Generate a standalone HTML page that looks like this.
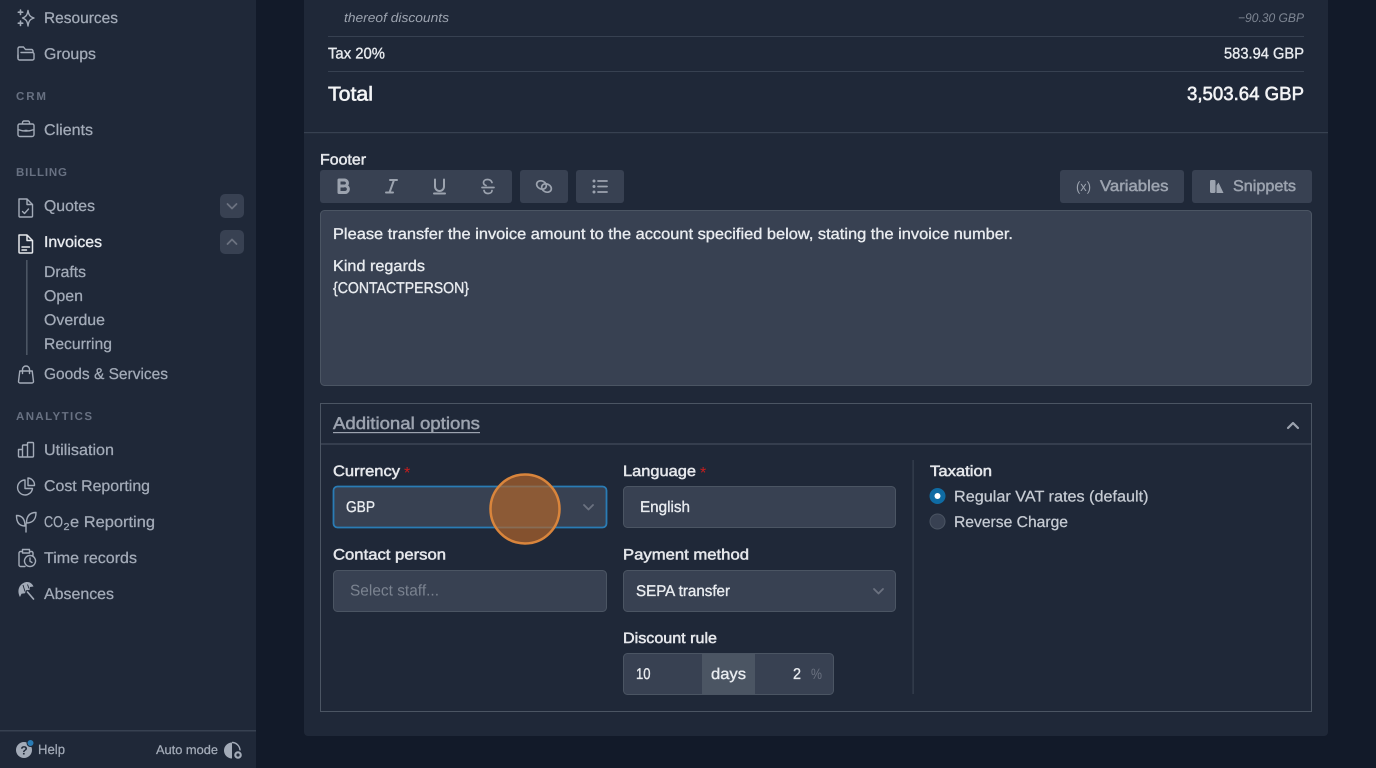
<!DOCTYPE html>
<html><head><meta charset="utf-8"><style>
html,body{margin:0;padding:0;background:#121a29;width:1376px;height:768px;overflow:hidden}
svg{display:block}
text{font-family:"Liberation Sans",sans-serif;white-space:pre;text-rendering:geometricPrecision}
.n{font-size:15.5px;fill:#a3abb8;stroke:#a3abb8;stroke-width:.25}
.h{font-size:11.5px;font-weight:700;fill:#687182}
.w{font-size:15.5px;fill:#e8ebef;stroke:#e8ebef;stroke-width:.35}
.l{font-size:15px;fill:#e5e7eb;stroke:#e5e7eb;stroke-width:.5}
.s{font-size:15.5px;fill:#c6cbd3;stroke:#c6cbd3;stroke-width:.25}
.i{fill:none;stroke:#a3abb8;stroke-width:1.4;stroke-linecap:round;stroke-linejoin:round}
.t{fill:none;stroke:#9ca3af;stroke-width:2;stroke-linecap:round;stroke-linejoin:round}
.c{fill:none;stroke:#6b7280;stroke-width:1.8;stroke-linecap:round;stroke-linejoin:round}
</style></head><body>
<svg width="1376" height="768" viewBox="0 0 1376 768" xmlns="http://www.w3.org/2000/svg">
<rect width="1376" height="768" fill="#121a29"/>
<!-- sidebar -->
<rect width="256" height="768" fill="#1f2838"/>
<rect x="0" y="730" width="256" height="1.5" fill="#374151"/>
<text class="n" x="44" y="23" textLength="74" lengthAdjust="spacingAndGlyphs">Resources</text>
<text class="n" x="44" y="59" textLength="52" lengthAdjust="spacingAndGlyphs">Groups</text>
<text class="h" x="16" y="100" textLength="30" lengthAdjust="spacing">CRM</text>
<text class="n" x="44" y="135" textLength="49" lengthAdjust="spacingAndGlyphs">Clients</text>
<text class="h" x="16" y="176" textLength="51" lengthAdjust="spacing">BILLING</text>
<text class="n" x="44" y="211" textLength="51" lengthAdjust="spacingAndGlyphs">Quotes</text>
<text class="w" x="44" y="247" textLength="58" lengthAdjust="spacingAndGlyphs">Invoices</text>
<text class="n" x="44" y="277" textLength="42" lengthAdjust="spacingAndGlyphs">Drafts</text>
<text class="n" x="44" y="301" textLength="39" lengthAdjust="spacingAndGlyphs">Open</text>
<text class="n" x="44" y="325" textLength="61" lengthAdjust="spacingAndGlyphs">Overdue</text>
<text class="n" x="44" y="349" textLength="68" lengthAdjust="spacingAndGlyphs">Recurring</text>
<text class="n" x="44" y="379" textLength="124" lengthAdjust="spacingAndGlyphs">Goods &amp; Services</text>
<text class="h" x="16" y="420" textLength="76" lengthAdjust="spacing">ANALYTICS</text>
<text class="n" x="44" y="455" textLength="70" lengthAdjust="spacingAndGlyphs">Utilisation</text>
<text class="n" x="44" y="491" textLength="106" lengthAdjust="spacingAndGlyphs">Cost Reporting</text>
<text class="n" x="44" y="527" textLength="19" lengthAdjust="spacingAndGlyphs">CO</text>
<text class="n" x="63.5" y="530" style="font-size:10px" textLength="6" lengthAdjust="spacingAndGlyphs">2</text>
<text class="n" x="70" y="527" textLength="85" lengthAdjust="spacingAndGlyphs">e Reporting</text>
<text class="n" x="44" y="563" textLength="93" lengthAdjust="spacingAndGlyphs">Time records</text>
<text class="n" x="44" y="599" textLength="70" lengthAdjust="spacingAndGlyphs">Absences</text>
<text class="n" x="38" y="754" style="font-size:13.5px" textLength="27" lengthAdjust="spacingAndGlyphs">Help</text>
<text class="n" x="156" y="754" style="font-size:12.5px" textLength="62" lengthAdjust="spacingAndGlyphs">Auto mode</text>
<!-- sidebar icons -->
<path class="i" d="M28 10.500c.8 4.800 2 6.200 6 7.500-4 1.300-5.200 2.700-6 8-.8-5.300-2-6.700-5.500-8 3.500-1.300 4.700-2.700 5.500-7.500z"/>
<path d="M20.500 10v4.500M18.300 12.200h4.400M20.500 21v4.500M18.300 23.200h4.400" fill="none" stroke="#a3abb8" stroke-width="1.600" stroke-linecap="round"/>
<path class="i" d="M18 58v-9.500a1.500 1.500 0 0 1 1.500-1.500h4l2 2.500h6a1.500 1.500 0 0 1 1.500 1.500v1"/>
<path class="i" d="M21 52.500h11.500a1.500 1.500 0 0 1 1.500 1.500v4.500a1.500 1.500 0 0 1-1.500 1.500H19.500A1.500 1.500 0 0 1 18 58.500V55"/>
<path class="i" d="M19.500 124h13a1.500 1.500 0 0 1 1.500 1.500v9a2 2 0 0 1-2 2H20a2 2 0 0 1-2-2v-9a1.500 1.500 0 0 1 1.500-1.500zM22.500 124v-1.500a1.500 1.500 0 0 1 1.500-1.500h4a1.500 1.500 0 0 1 1.500 1.500V124M18 129.500c5 2 11 2 16 0M25 130.500h2"/>
<path class="i" d="M19 199h8l5.500 5.500v11.500a1 1 0 0 1-1 1H20a1 1 0 0 1-1-1zM27 199v5.500h5.500M22.500 211.500l2 2 4-4.500"/>
<path d="M19 235h8l5.500 5.500v11.500a1 1 0 0 1-1 1H20a1 1 0 0 1-1-1zM27 235v5.500h5.500M22 247h7.500M22 250h4.500" fill="none" stroke="#e5e7eb" stroke-width="1.500" stroke-linecap="round" stroke-linejoin="round"/>
<rect x="26" y="260" width="1.600" height="95" fill="#4b5563"/>
<path class="i" d="M19.800 371h12.400l1.300 10.500a1.500 1.500 0 0 1-1.500 1.500H20a1.500 1.500 0 0 1-1.500-1.500zM22.500 373.500v-4a3.500 3.500 0 0 1 7 0v4"/>
<path class="i" d="M18.500 449.500h4v7.500h-3a1 1 0 0 1-1-1zM22.500 457v-11a1 1 0 0 1 1-1h3a1 1 0 0 1 1 1v11zM27.500 457v-13.500a1 1 0 0 1 1-1h4a1 1 0 0 1 1 1v12.500a1 1 0 0 1-1 1z"/>
<path class="i" d="M25 480a7.500 7.500 0 1 0 7.500 8.500H25zM28 478v7.500h6.500A7 7 0 0 0 28 478z"/>
<path class="i" d="M26 532v-8M25 526c-5.500 0-8.500-3.500-8.500-10.500 5.500 0 8.500 3.500 8.500 10.500zM26.500 523c0-7 3-10.500 9.500-10.500 0 7-3.500 10.500-9.500 10.500z"/>
<path class="i" d="M22.500 551.500h-2a1.500 1.500 0 0 0-1.500 1.500v12a1.500 1.500 0 0 0 1.500 1.500h4.500M29.500 551.500h2a1.500 1.500 0 0 1 1.500 1.500v2.500M22.500 549.500h7v3.500h-7zM30 555.500a5.500 5.500 0 1 0 .01 0zM30 558v3.200l2 1.300"/>
<path d="M20 597c-3-5.500-1.500-11.500 3.500-14 4-2 8-.8 10 3.500l-3.500.5-.5 3-3.500 .2-1 3-3.500.5z" fill="#a3abb8"/>
<path d="M23 585l2 6.500M27.500 584.500l1.500 4" fill="none" stroke="#1f2838" stroke-width=".9"/>
<path class="i" d="M27.500 592l6 7" style="stroke-width:1.700"/>
<circle cx="24" cy="750" r="8" fill="#a3abb8"/>
<text x="24" y="754.500" text-anchor="middle" style="font-size:12px;font-weight:700;fill:#1f2838">?</text>
<circle cx="30.500" cy="743" r="3.500" fill="#2a7cb5" stroke="#1f2838" stroke-width="1"/>
<path d="M232 742.500a8 8 0 0 0 0 16z" fill="#a3abb8"/>
<path d="M232 742.500a8 8 0 0 1 8 8" fill="none" stroke="#a3abb8" stroke-width="1.400"/>
<circle cx="238" cy="755" r="5" fill="#1f2838"/>
<circle cx="238" cy="755" r="2.700" fill="none" stroke="#a3abb8" stroke-width="2.200"/>
<rect x="220" y="194" width="24" height="24" rx="5" fill="#384152"/>
<path class="c" d="M227.500 204l4.500 4.500 4.500-4.500"/>
<rect x="220" y="230" width="24" height="24" rx="5" fill="#384152"/>
<path class="c" d="M227.500 244l4.500-4.500 4.500 4.500"/>
<!-- card -->
<rect x="304" y="-10" width="1024" height="746" rx="4" fill="#1f2838"/>
<text x="344" y="22" style="font-size:13px;font-style:italic;fill:#9ca3af" textLength="105" lengthAdjust="spacingAndGlyphs">thereof discounts</text>
<text x="1238" y="22" style="font-size:12.500px;font-style:italic;fill:#7d8592" textLength="66" lengthAdjust="spacingAndGlyphs">−90.30 GBP</text>
<rect x="328" y="36" width="976" height="1" fill="#374151"/>
<rect x="328" y="71" width="976" height="1" fill="#374151"/>
<text class="w" x="328" y="58.500" textLength="57" lengthAdjust="spacingAndGlyphs">Tax 20%</text>
<text class="w" x="1224" y="58.500" textLength="80" lengthAdjust="spacingAndGlyphs">583.94 GBP</text>
<text x="328" y="100.500" style="font-size:20px;fill:#f3f4f6;stroke:#f3f4f6;stroke-width:.6" textLength="45" lengthAdjust="spacingAndGlyphs">Total</text>
<text x="1187" y="100" style="font-size:19px;fill:#f3f4f6;stroke:#f3f4f6;stroke-width:.6" textLength="117" lengthAdjust="spacingAndGlyphs">3,503.64 GBP</text>
<rect x="304" y="132" width="1024" height="1.200" fill="#374151"/>
<text class="l" x="320" y="164.500" textLength="46" lengthAdjust="spacingAndGlyphs">Footer</text>
<!-- toolbar -->
<rect x="320" y="170" width="192" height="33" rx="3" fill="#384152"/>
<rect x="520" y="170" width="48" height="33" rx="3" fill="#384152"/>
<rect x="576" y="170" width="48" height="33" rx="3" fill="#384152"/>
<rect x="1060" y="170" width="124" height="33" rx="3" fill="#384152"/>
<rect x="1192" y="170" width="120" height="33" rx="3" fill="#384152"/>
<path d="M339 180h5.500a3 3 0 0 1 1 5.800 3.300 3.300 0 0 1-1 6.700H339zM339 186h5.500" fill="none" stroke="#9ca3af" stroke-width="3" stroke-linejoin="round"/>
<path class="t" d="M390 180h7M386 192.500h7M394 180l-4.500 12.500"/>
<path class="t" d="M435 179.500v7a4.500 4.500 0 0 0 9 0v-7M434 193.500h11"/>
<path d="M482 187.500h12M492 182.500c-.5-2-2.500-3-4.500-3-2.500 0-4 1.300-4 3 0 1.500 1 2.500 2.500 3M484 190.500c.5 2 2 3 4 3 2.500 0 4-1.300 4-3" fill="none" stroke="#9ca3af" stroke-width="1.700" stroke-linecap="round"/>
<ellipse cx="541.500" cy="185" rx="5" ry="4" transform="rotate(25 541.500 185)" fill="none" stroke="#9ca3af" stroke-width="1.700"/>
<ellipse cx="546.500" cy="188" rx="5" ry="4" transform="rotate(25 546.500 188)" fill="none" stroke="#9ca3af" stroke-width="1.700"/>
<path d="M598 181h9M598 186.500h9M598 192h9" fill="none" stroke="#9ca3af" stroke-width="1.800" stroke-linecap="round"/>
<circle cx="594" cy="181" r="1.500" fill="#9ca3af"/><circle cx="594" cy="186.500" r="1.500" fill="#9ca3af"/><circle cx="594" cy="192" r="1.500" fill="#9ca3af"/>
<text x="1076" y="191" style="font-size:13.500px;fill:#9ca3af" textLength="15" lengthAdjust="spacingAndGlyphs">(x)</text>
<text class="n" x="1100" y="191" style="fill:#9ca3af;stroke:#9ca3af;stroke-width:.5" textLength="68.500" lengthAdjust="spacingAndGlyphs">Variables</text>
<rect x="1210" y="180" width="5.500" height="13" rx="1.200" fill="#9ca3af"/>
<path d="M1216.500 193v-7.500l2-3 5 10.500z" fill="#9ca3af"/>
<text class="n" x="1233" y="191" style="fill:#9ca3af;stroke:#9ca3af;stroke-width:.5" textLength="63" lengthAdjust="spacingAndGlyphs">Snippets</text>
<!-- editor -->
<rect x="320.500" y="210.500" width="991" height="175" rx="4" fill="#384152" stroke="#4b5563"/>
<text class="w" x="333" y="239" textLength="680" lengthAdjust="spacingAndGlyphs">Please transfer the invoice amount to the account specified below, stating the invoice number.</text>
<text class="w" x="333" y="271" textLength="92" lengthAdjust="spacingAndGlyphs">Kind regards</text>
<text class="w" x="333" y="293" textLength="136" lengthAdjust="spacingAndGlyphs">{CONTACTPERSON}</text>
<!-- additional options -->
<rect x="320.500" y="403.500" width="991" height="308" fill="none" stroke="#4b5563"/>
<rect x="321" y="443.500" width="990" height="1" fill="#4b5563"/>
<text x="333" y="429" style="font-size:17px;fill:#9ca3af;stroke:#9ca3af;stroke-width:.5" textLength="147" lengthAdjust="spacingAndGlyphs">Additional options</text>
<rect x="333" y="432" width="147" height="1.200" fill="#9ca3af"/>
<path d="M1288 428l5-5 5 5" fill="none" stroke="#9ca3af" stroke-width="2.200" stroke-linecap="round" stroke-linejoin="round"/>
<text class="l" x="333" y="476" textLength="67" lengthAdjust="spacingAndGlyphs">Currency</text>
<text x="404" y="478" style="font-size:16px;fill:#c81e1e">*</text>
<rect x="333.500" y="486.500" width="273" height="41" rx="4" fill="#384152" stroke="#2a7cb5" stroke-width="1.800"/>
<text class="w" x="346" y="512" textLength="29" lengthAdjust="spacingAndGlyphs">GBP</text>
<path class="c" d="M584 505l4.500 4.500 4.500-4.500"/>
<text class="l" x="333" y="559.500" textLength="113" lengthAdjust="spacingAndGlyphs">Contact person</text>
<rect x="333.500" y="570.500" width="273" height="41" rx="4" fill="#384152" stroke="#4b5563"/>
<text x="350" y="595.500" style="font-size:15.500px;fill:#7b8390" textLength="89" lengthAdjust="spacingAndGlyphs">Select staff...</text>
<text class="l" x="623" y="476" textLength="73" lengthAdjust="spacingAndGlyphs">Language</text>
<text x="700" y="478" style="font-size:16px;fill:#c81e1e">*</text>
<rect x="623.500" y="486.500" width="272" height="41" rx="4" fill="#384152" stroke="#4b5563"/>
<text class="w" x="640" y="512" textLength="50" lengthAdjust="spacingAndGlyphs">English</text>
<text class="l" x="623" y="559.500" textLength="126" lengthAdjust="spacingAndGlyphs">Payment method</text>
<rect x="623.500" y="570.500" width="272" height="41" rx="4" fill="#384152" stroke="#4b5563"/>
<text class="w" x="636" y="596" textLength="94" lengthAdjust="spacingAndGlyphs">SEPA transfer</text>
<path class="c" d="M874 589l4.500 4.500 4.500-4.500"/>
<text class="l" x="623" y="643" textLength="94" lengthAdjust="spacingAndGlyphs">Discount rule</text>
<rect x="623.500" y="653.500" width="210" height="41" rx="4" fill="#384152" stroke="#4b5563"/>
<rect x="702" y="654" width="53" height="40" fill="#4b5563"/>
<text class="w" x="636" y="679" textLength="14.500" lengthAdjust="spacingAndGlyphs">10</text>
<text class="w" x="711" y="679" textLength="35" lengthAdjust="spacingAndGlyphs">days</text>
<text class="w" x="793" y="679" textLength="8" lengthAdjust="spacingAndGlyphs">2</text>
<text x="811" y="679" style="font-size:15px;fill:#6b7280" textLength="11" lengthAdjust="spacingAndGlyphs">%</text>
<rect x="912.500" y="460" width="1.200" height="234" fill="#374151"/>
<text class="l" x="930" y="476" textLength="62" lengthAdjust="spacingAndGlyphs">Taxation</text>
<circle cx="937.500" cy="496" r="8" fill="#0f6ba3"/>
<circle cx="937.500" cy="496" r="3" fill="#fff"/>
<text class="s" x="954" y="501.500" textLength="194.500" lengthAdjust="spacingAndGlyphs">Regular VAT rates (default)</text>
<circle cx="937.500" cy="521.500" r="7.500" fill="#384152" stroke="#4b5563"/>
<text class="s" x="954" y="527" textLength="114" lengthAdjust="spacingAndGlyphs">Reverse Charge</text>
<!-- cursor highlight -->
<circle cx="525" cy="509" r="34.500" fill="#b4662a" fill-opacity=".68" stroke="#d9853c" stroke-width="2.500"/>
</svg>
</body></html>
